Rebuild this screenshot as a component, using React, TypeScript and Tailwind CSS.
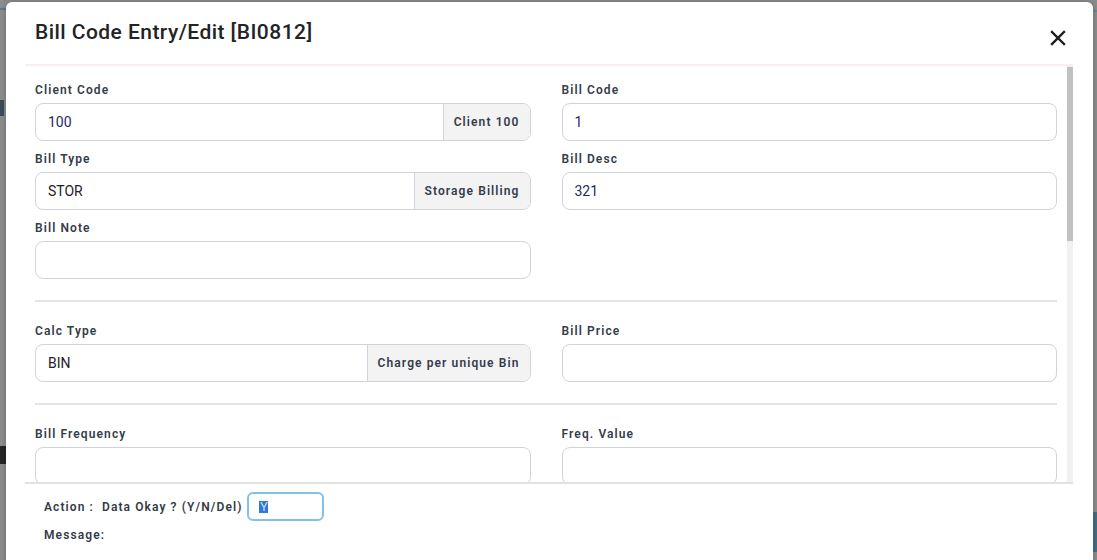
import React from 'react'

type Field = { label: string; value?: string; addon?: string; dark?: boolean }

const SECTIONS: Field[][] = [
  [
    { label: 'Client Code', value: '100', addon: 'Client 100' },
    { label: 'Bill Code', value: '1' },
    { label: 'Bill Type', value: 'STOR', addon: 'Storage Billing', dark: true },
    { label: 'Bill Desc', value: '321' },
    { label: 'Bill Note' },
  ],
  [
    { label: 'Calc Type', value: 'BIN', addon: 'Charge per unique Bin', dark: true },
    { label: 'Bill Price' },
  ],
  [
    { label: 'Bill Frequency' },
    { label: 'Freq. Value' },
  ],
]

const FONT = { fontFamily: 'Roboto, "Liberation Sans", sans-serif' }

function FieldBox({ f }: { f: Field }) {
  return (
    <div>
      <div className="text-[12px] leading-[18px] font-semibold tracking-[1.1px] text-[#343c4a] mb-[4px]">
        {f.label}
      </div>
      <div className="flex h-[38px] border border-[#cfd4dc] rounded-[8px] bg-white overflow-hidden">
        <div
          className={
            'flex-1 flex items-center pl-[12px] text-[14px] ' +
            (f.dark ? 'text-[#1f2125]' : 'text-[#1d2a66]')
          }
        >
          {f.value ?? ''}
        </div>
        {f.addon && (
          <div className="flex items-center px-[10px] bg-[#f3f3f3] border-l border-[#cfd4dc] text-[12px] font-semibold tracking-[1.1px] text-[#343c4a]">
            {f.addon}
          </div>
        )}
      </div>
    </div>
  )
}

export default function App() {
  return (
    <div className="relative w-[1097px] h-[560px] overflow-hidden bg-[#8d8d8d]" style={FONT}>
      {/* page behind the overlay */}
      <div className="absolute left-0 top-0 w-[6px] h-full">
        <div className="h-[10px] border-b-2 border-[#4f7f96]" />
        <div className="mt-[90px] h-[16px] w-[4px] bg-[#3e4a5a]" />
        <div className="mt-[330px] h-[18px] w-[6px] bg-[#262626]" />
      </div>
      <div className="absolute right-0 top-0 w-[4px] h-full">
        <div className="mt-[10px] h-[2px] bg-[#5b8da4]" />
        <div className="mt-[500px] h-[40px] bg-[#456f84]" />
      </div>

      {/* modal */}
      <div className="relative ml-[6px] mt-[2px] w-[1087px] h-[570px] bg-white rounded-[6px] flex flex-col shadow-[0_0_6px_rgba(0,0,0,0.25)]">
        <div className="mx-[19px] mr-[20px] h-[64px] flex items-center justify-between border-b-2 border-[#f7eff1] pl-[10px]">
          <h1 className="text-[21px] font-medium tracking-[0.45px] text-[#222325]">
            Bill Code Entry/Edit [BI0812]
          </h1>
          <button className="mt-[10px] mr-[7px] text-[#1e1e1e]">
            <svg width="16" height="16" viewBox="0 0 16 16" fill="none" stroke="currentColor" strokeWidth="2.4" strokeLinecap="square">
              <path d="M2 2L14 14M14 2L2 14" />
            </svg>
          </button>
        </div>

        <div className="mx-[19px] mr-[20px] h-[416px] flex">
          <div className="flex-1 overflow-hidden px-[10px] pt-[15px]">
            {SECTIONS.map((sec, i) => (
              <div key={i}>
                {i > 0 && <div className="mt-[21px] mb-[20px] h-[2px] bg-[#e4e4e4]" />}
                <div className="grid grid-cols-2 gap-x-[31px] gap-y-[9px]">
                  {sec.map((f) => (
                    <FieldBox key={f.label} f={f} />
                  ))}
                </div>
              </div>
            ))}
          </div>
          {/* scrollbar */}
          <div className="w-[6px] bg-[#f1f1f1] pt-[1px]">
            <div className="h-[174px] bg-[#c1c1c1]" />
          </div>
        </div>

        <div className="mx-[19px] mr-[20px] border-t-2 border-[#e2e2e2] pl-[19px] pt-[8px] text-[12px] font-semibold tracking-[1.1px] text-[#333b48]">
          <div className="flex items-center h-[29px]">
            <span>Action :</span>
            <span className="ml-[8px]">Data Okay ? (Y/N/Del)</span>
            <div className="ml-[5px] w-[77px] h-[29px] border-2 border-[#7fc4e8] rounded-[6px] flex items-center pl-[10px]">
              <span className="bg-[#2f78d8] text-[#c9dcf5] text-[13px] leading-[12px] h-[12px] px-[0.5px] font-normal tracking-normal">
                Y
              </span>
            </div>
          </div>
          <div className="mt-[5px] leading-[18px]">Message:</div>
        </div>
      </div>
    </div>
  )
}
